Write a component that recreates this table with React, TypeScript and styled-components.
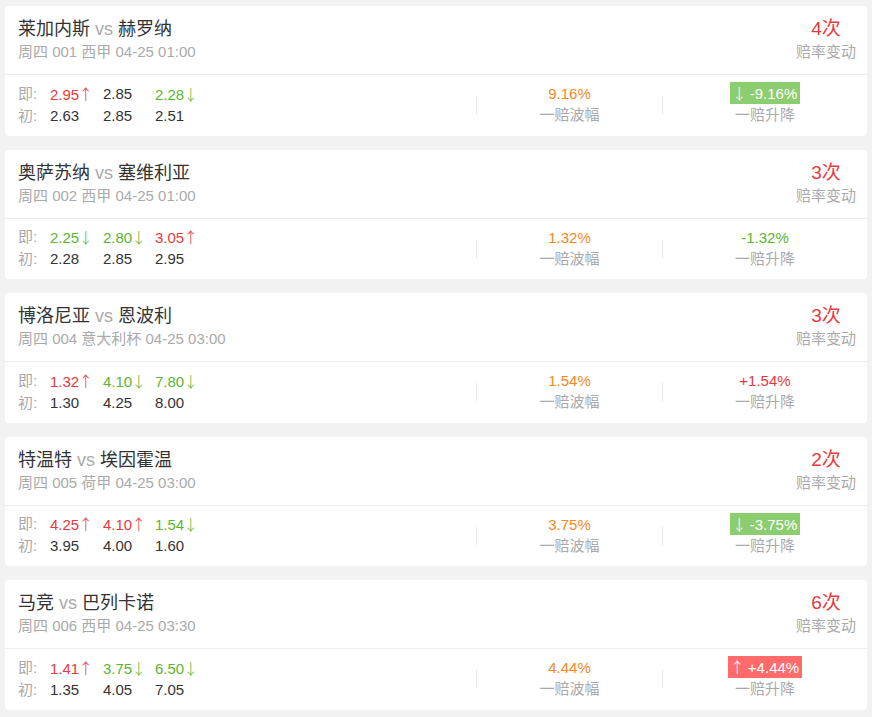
import React from 'react';
import styled, { createGlobalStyle } from 'styled-components';

const GlobalStyle = createGlobalStyle`
  html, body {
    margin: 0;
    padding: 0;
    background: #f2f2f2;
    font-family: "Liberation Sans", Arial, "Noto Sans CJK SC", sans-serif;
  }
`;

const RED = '#e9393d';
const GREEN = '#5cb531';

const List = styled.div`
  display: flex;
  flex-direction: column;
  gap: 14px;
  padding: 6px 5px;
`;

const Card = styled.div`
  background: #fff;
  border-radius: 4px;
  height: 129.5px;
  display: flex;
  flex-direction: column;
`;

const Header = styled.div`
  display: flex;
  justify-content: space-between;
  align-items: flex-start;
  padding: 11px 11px 12px 13px;
  border-bottom: 1px solid #eeeeee;
`;

const Title = styled.div`
  font-size: 18px;
  line-height: 24px;
  color: #333;
`;

const Vs = styled.span`
  color: #aaa;
`;

const Sub = styled.div`
  font-size: 15px;
  line-height: 21px;
  color: #aaa;
`;

const Changes = styled.div`
  text-align: center;
`;

const Count = styled.div`
  font-size: 19px;
  line-height: 24px;
  color: ${RED};
`;

const Body = styled.div`
  flex: 1;
  display: grid;
  grid-template-columns: 1fr 1px 185px 1px 204px;
  align-items: center;
  padding: 0 0 2px 13px;
`;

const Odds = styled.div`
  display: grid;
  grid-template-columns: 32px 53px 52px 52px;
  font-size: 15px;
  line-height: 21px;
  color: #333;
`;

const Label = styled.span`
  color: #aaa;
`;

const Val = styled.span<{ $c?: string }>`
  color: ${(p) => p.$c || '#333'};
  white-space: nowrap;
`;

const Arrow = styled.span<{ $tight?: boolean }>`
  font-family: "Noto Sans CJK SC", sans-serif;
  font-weight: 300;
  font-size: 15px;
  margin-left: ${(p) => (p.$tight ? '-1px' : '0')};
  margin-right: ${(p) => (p.$tight ? '0' : '3px')};
`;

const Divider = styled.div`
  width: 1px;
  height: 18px;
  background: #e8e8e8;
  margin-top: 2px;
`;

const Stat = styled.div`
  display: flex;
  flex-direction: column;
  align-items: center;
  font-size: 15px;
  line-height: 21px;
`;

const StatValue = styled.div<{ $c: string }>`
  color: ${(p) => p.$c};
`;

const Badge = styled.div<{ $bg: string }>`
  background: ${(p) => p.$bg};
  color: #fff;
  height: 22px;
  line-height: 22px;
  padding: 0 3px 0 2px;
  margin-top: -1px;
  white-space: nowrap;
`;

const Caption = styled.div`
  color: #aaa;
`;

type Dir = 'up' | 'down' | '';
type Match = {
  home: string;
  away: string;
  info: string;
  count: number;
  now: [string, Dir][];
  init: string[];
  amp: string;
  rise: number;
};

const matches: Match[] = [
  { home: '莱加内斯', away: '赫罗纳', info: '周四 001 西甲 04-25 01:00', count: 4,
    now: [['2.95', 'up'], ['2.85', ''], ['2.28', 'down']], init: ['2.63', '2.85', '2.51'], amp: '9.16%', rise: -9.16 },
  { home: '奥萨苏纳', away: '塞维利亚', info: '周四 002 西甲 04-25 01:00', count: 3,
    now: [['2.25', 'down'], ['2.80', 'down'], ['3.05', 'up']], init: ['2.28', '2.85', '2.95'], amp: '1.32%', rise: -1.32 },
  { home: '博洛尼亚', away: '恩波利', info: '周四 004 意大利杯 04-25 03:00', count: 3,
    now: [['1.32', 'up'], ['4.10', 'down'], ['7.80', 'down']], init: ['1.30', '4.25', '8.00'], amp: '1.54%', rise: 1.54 },
  { home: '特温特', away: '埃因霍温', info: '周四 005 荷甲 04-25 03:00', count: 2,
    now: [['4.25', 'up'], ['4.10', 'up'], ['1.54', 'down']], init: ['3.95', '4.00', '1.60'], amp: '3.75%', rise: -3.75 },
  { home: '马竞', away: '巴列卡诺', info: '周四 006 西甲 04-25 03:30', count: 6,
    now: [['1.41', 'up'], ['3.75', 'down'], ['6.50', 'down']], init: ['1.35', '4.05', '7.05'], amp: '4.44%', rise: 4.44 },
];

const Rise = ({ v }: { v: number }) => {
  const text = (v > 0 ? '+' : '') + v.toFixed(2) + '%';
  if (Math.abs(v) >= 3) {
    return (
      <Badge $bg={v > 0 ? '#ff6b6b' : '#8ccd6f'}>
        <Arrow>{v > 0 ? '↑' : '↓'}</Arrow>{text}
      </Badge>
    );
  }
  return <StatValue $c={v > 0 ? RED : GREEN}>{text}</StatValue>;
};

export default function App() {
  return (
    <>
      <GlobalStyle />
      <List>
        {matches.map((m) => (
          <Card key={m.info}>
            <Header>
              <div>
                <Title>
                  {m.home} <Vs>vs</Vs> {m.away}
                </Title>
                <Sub>{m.info}</Sub>
              </div>
              <Changes>
                <Count>{m.count}次</Count>
                <Sub>赔率变动</Sub>
              </Changes>
            </Header>
            <Body>
              <Odds>
                <Label>即:</Label>
                {m.now.map(([v, d], i) => (
                  <Val key={i} $c={d === 'up' ? RED : d === 'down' ? GREEN : undefined}>
                    {v}
                    {d && <Arrow $tight>{d === 'up' ? '↑' : '↓'}</Arrow>}
                  </Val>
                ))}
                <Label>初:</Label>
                {m.init.map((v, i) => (
                  <Val key={i}>{v}</Val>
                ))}
              </Odds>
              <Divider />
              <Stat>
                <StatValue $c="#f7871f">{m.amp}</StatValue>
                <Caption>一赔波幅</Caption>
              </Stat>
              <Divider />
              <Stat>
                <Rise v={m.rise} />
                <Caption>一赔升降</Caption>
              </Stat>
            </Body>
          </Card>
        ))}
      </List>
    </>
  );
}
